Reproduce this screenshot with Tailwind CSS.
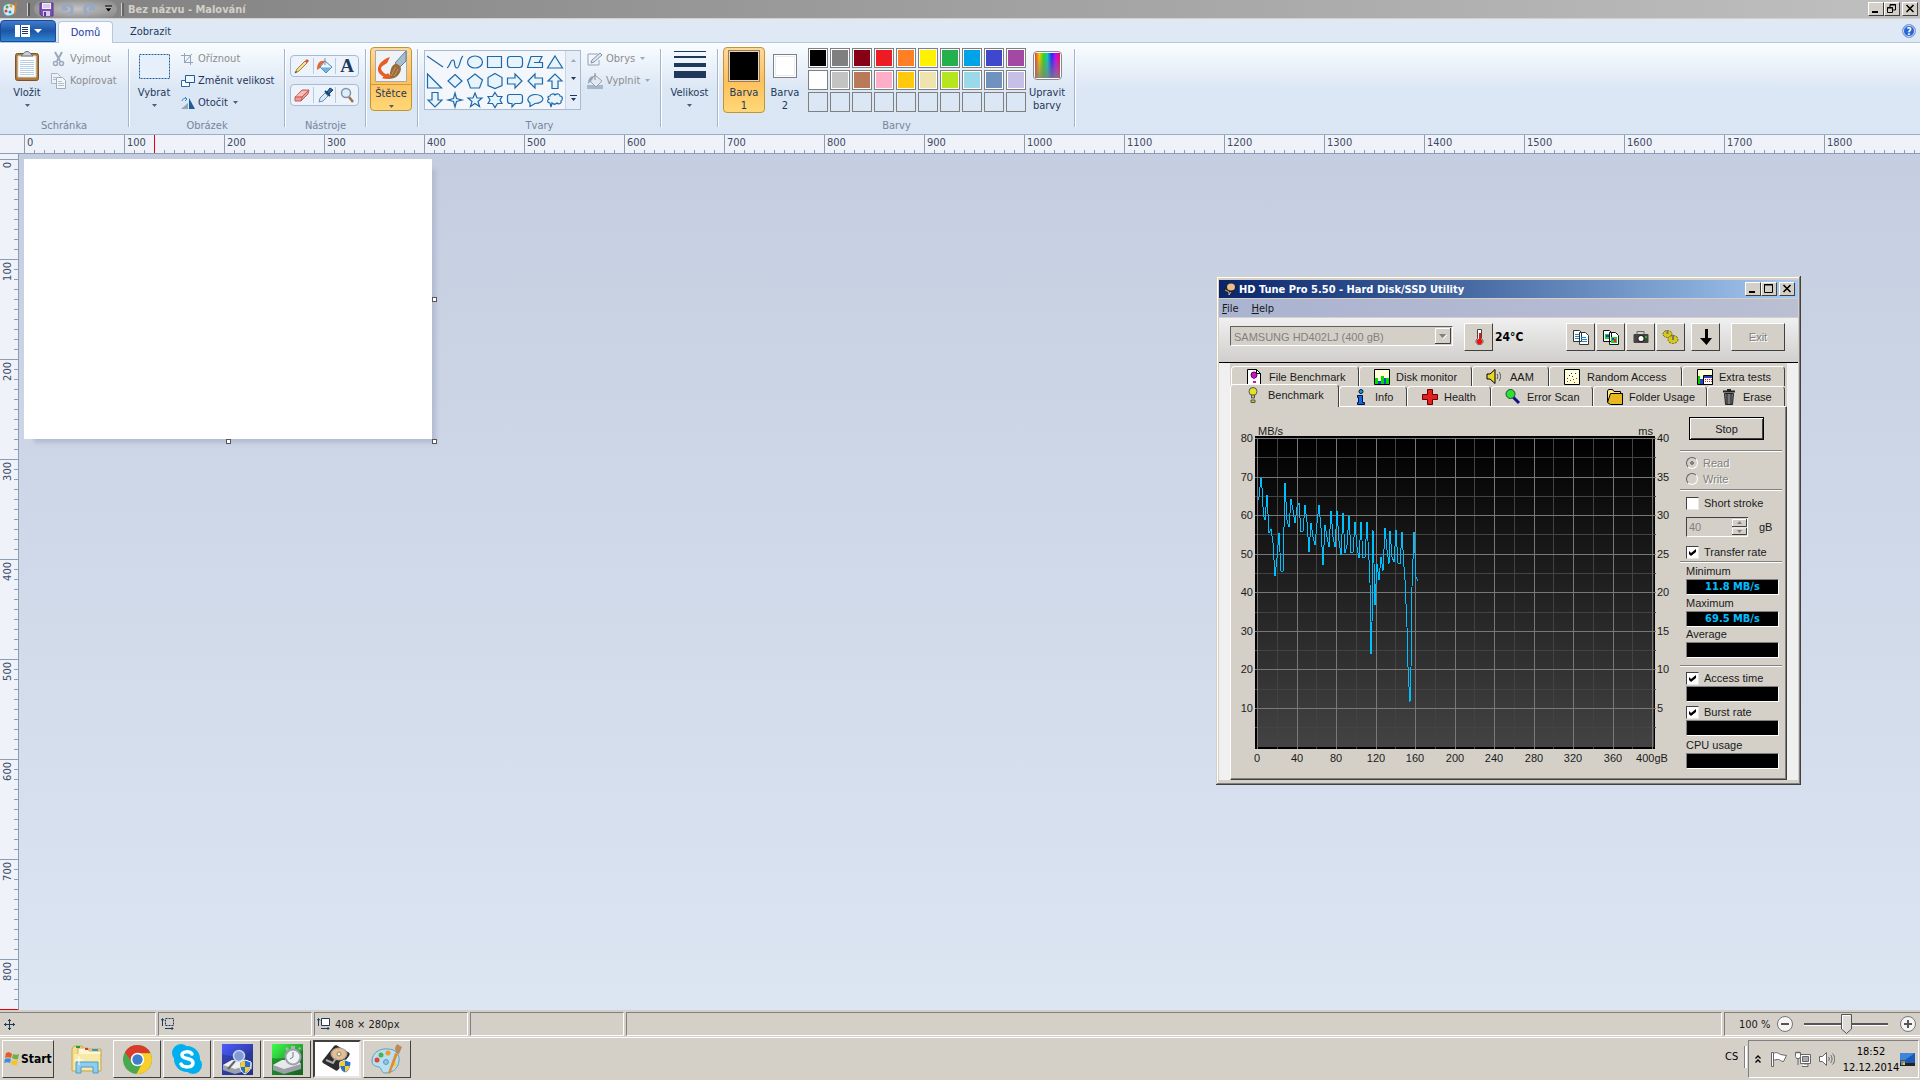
<!DOCTYPE html>
<html lang="cs">
<head>
    <meta charset="UTF-8">
    <meta name="viewport" content="width=device-width, initial-scale=1.0">
    <title>Bez názvu - Malování</title>
    <script src="https://cdn.jsdelivr.net/npm/@tailwindcss/browser@4"></script>
</head>
<body class="h-screen flex flex-col overflow-hidden bg-[#d4d0c8] text-[11px] leading-[14px] text-black font-['DejaVu_Sans_Condensed','DejaVu_Sans',sans-serif]">

    <!-- title bar -->
    <header class="h-[19px] shrink-0 flex items-center bg-linear-to-r from-[#808080] to-[#c0c0c0] border-b border-[#d4d0c8]">
        <svg class="w-4 h-4 ml-[2px]" viewBox="0 0 16 16">
            <path d="M1 8c0-4 4-6 8-5 4 0 6 4 5 7s-5 5-8 5-5-3-5-7z" fill="#d4ecf6" stroke="#4f94b8"/>
            <circle cx="4" cy="10" r="1.500" fill="#e33"/><circle cx="5" cy="6" r="1.500" fill="#4a4"/><circle cx="9" cy="5" r="1.500" fill="#f90"/><circle cx="8" cy="11" r="1.500" fill="#29c"/>
            <path d="M13 1l2 1-2 12-1-1z" fill="#e57a1c"/>
        </svg>
        <div class="w-[3px] h-[13px] ml-[9px] border-l border-[#d4d0c8] bg-[#555]"></div>
        <div class="h-[18px] w-[83px] ml-1 flex items-center gap-[6px] px-[5px] rounded-full bg-radial from-[#c4c4c4] to-transparent">
            <button aria-label="Uložit"><svg class="w-[15px] h-[15px]" viewBox="0 0 15 15"><path d="M1 1h13v13H3l-2-2z" fill="#7b4fb5" stroke="#59368f"/><path d="M3 1h9v6H3z" fill="#f4eefb"/><path d="M4 3h7M4 5h7" stroke="#b9a4d8"/><path d="M4 9h7v5H4z" fill="#d9cdea"/><path d="M5 10h2v4H5z" fill="#59368f"/></svg></button>
            <button aria-label="Zpět"><svg class="w-4 h-[14px]" viewBox="0 0 16 14"><path d="M3 2v5h5M3 6c4-5 10-3 9 2 0 2-2 4-4 5" fill="none" stroke="#98a9c2" stroke-width="3"/></svg></button>
            <button aria-label="Znovu"><svg class="w-4 h-[14px]" viewBox="0 0 16 14"><path d="M12 2v5H7M12 6C8 1 2 3 3 8c0 2 2 4 4 5" fill="none" stroke="#98a9c2" stroke-width="3"/></svg></button>
            <button aria-label="Přizpůsobit"><svg class="w-[9px] h-[8px]" viewBox="0 0 9 8"><path d="M1 1h7" stroke="#000"/><path d="M1 3h7L4.500 7z" fill="#000" stroke="#ddd" stroke-width=".5"/></svg></button>
        </div>
        <div class="w-[3px] h-[13px] ml-1 border-l border-[#d4d0c8] bg-[#666]"></div>
        <h1 class="ml-[4px] pt-[2px] font-bold text-[#d4d0c8]">Bez názvu - Malování</h1>
        <div class="ml-auto mr-[2px] flex">
            <button aria-label="Minimalizovat" class="w-4 h-[14px] bg-[#d4d0c8] border border-t-white border-l-white border-b-[#404040] border-r-[#404040]"><svg class="w-[14px] h-3" viewBox="0 0 14 12"><path d="M3 8h6v2H3z"/></svg></button>
            <button aria-label="Obnovit" class="w-4 h-[14px] bg-[#d4d0c8] border border-t-white border-l-white border-b-[#404040] border-r-[#404040]"><svg class="w-[14px] h-3" viewBox="0 0 14 12" fill="none" stroke="#000"><path d="M5 4V1.500h5.500V7H8M5 2h6M2.500 4.500h5v5h-5zM2 5h6"/></svg></button>
            <button aria-label="Zavřít" class="w-4 h-[14px] ml-[2px] bg-[#d4d0c8] border border-t-white border-l-white border-b-[#404040] border-r-[#404040]"><svg class="w-[14px] h-3" viewBox="0 0 14 12"><path d="M3.500 2l7 7M10.500 2l-7 7" stroke="#000" stroke-width="1.600"/></svg></button>
        </div>
    </header>

    <!-- ribbon tabs -->
    <nav class="h-6 shrink-0 flex items-end bg-[#dfe9f5] border-b border-[#b5c6dd] text-[#1e395b]">
        <button aria-label="Nabídka" class="w-14 h-[22px] flex items-center justify-center gap-1 rounded-t-sm border border-[#1b4a9a] bg-linear-to-b from-[#3f7ccb] via-[#1d55a8] to-[#2f86d0]">
            <svg class="w-[15px] h-3" viewBox="0 0 15 12"><path d="M0 0h15v12H0z" fill="#fff"/><path d="M5.500 0v12" stroke="#1d55a8"/><path d="M7 2.500h6M7 4.500h6M7 6.500h6M7 8.500h6" stroke="#1e395b"/></svg>
            <svg class="w-2 h-1" viewBox="0 0 8 4"><path d="M0 0h8L4 4z" fill="#fff"/></svg>
        </button>
        <button class="w-[55px] h-[22px] ml-[2px] -mb-px pt-px border border-b-0 border-[#b5c6dd] rounded-t-sm bg-[#fafcff] text-[#1c3aa0]">Domů</button>
        <button class="w-[75px] h-[22px] pt-[2px]">Zobrazit</button>
        <button aria-label="Nápověda" class="ml-auto mr-1 mb-1"><svg class="w-[14px] h-[14px]" viewBox="0 0 14 14"><circle cx="7" cy="7" r="6.500" fill="#2765d8" stroke="#8aa4cc"/><circle cx="7" cy="7" r="5.500" fill="none" stroke="#cfe0fa"/><text x="7" y="11" text-anchor="middle" font-size="10" font-weight="bold" fill="#fff">?</text></svg></button>
    </nav>

    <!-- ribbon -->
    <section class="h-[92px] shrink-0 flex border-b border-[#9cadc8] bg-linear-to-b from-[#fafdff] via-[#dce7f5] to-[#dbe6f4] text-[#1e395b]">
        <div class="w-32 flex flex-col pt-1">
            <div class="h-[72px] flex pl-[10px]">
                <button class="w-[34px] flex flex-col items-center pt-1">
                    <svg class="w-6 h-[30px]" viewBox="0 0 24 30"><rect x=".5" y="2.500" width="23" height="27" rx="2" fill="#ae7a3c" stroke="#7d5323"/><path d="M3 5h18v21H3z" fill="#fff" stroke="#d8d8d8"/><path d="M5 9.500h14M5 11.500h14M5 13.500h14M5 15.500h14M5 17.500h14M5 19.500h14M5 21.500h14M5 23.500h14" stroke="#b9cfe4"/><path d="M6 5l3-3c1-2 5-2 6 0l3 3z" fill="#c9ced4" stroke="#6b7178"/></svg>
                    <span class="mt-[5px]">Vložit</span>
                    <svg class="w-[5px] h-[3px] mt-1" viewBox="0 0 5 3"><path d="M0 0h5L2.500 3z" fill="#4c607a"/></svg>
                </button>
                <div class="ml-[7px] flex flex-col text-[#8d8d8d]">
                    <button class="h-[22px] flex items-center gap-1 pt-px"><svg class="w-[15px] h-4" viewBox="0 0 15 16"><path d="M4 1l5 9M11 1L6 10" stroke="#9aa9bd" stroke-width="2"/><circle cx="4.500" cy="12.500" r="2" fill="none" stroke="#9aa9bd" stroke-width="1.500"/><circle cx="10.500" cy="12.500" r="2" fill="none" stroke="#9aa9bd" stroke-width="1.500"/></svg>Vyjmout</button>
                    <button class="h-[22px] flex items-center gap-1 pt-px"><svg class="w-[15px] h-4" viewBox="0 0 15 16"><path d="M.5.5h6l3 3v7h-9z" fill="#eef2f7" stroke="#a9b4c4"/><path d="M5.500 4.500h6l3 3v8h-9z" fill="#f4f7fa" stroke="#a0acbd"/><path d="M2 4.500h3M2 6.500h3M7 8.500h4M7 10.500h6M7 12.500h6" stroke="#b4bfcd"/></svg>Kopírovat</button>
                </div>
            </div>
            <div class="text-center text-[#75859c]">Schránka</div>
        </div>
        <div class="w-[2px] h-[78px] mt-[6px] border-l border-[#a3b5cf] bg-white"></div>

        <div class="w-[154px] flex flex-col pt-1">
            <div class="h-[72px] flex">
                <button class="w-12 flex flex-col items-center pt-[7px]">
                    <svg class="w-[31px] h-[25px]" viewBox="0 0 31 25"><rect x=".5" y=".5" width="30" height="24" fill="#e6f0fa" stroke="#1e5c9c" stroke-dasharray="2 1"/></svg>
                    <span class="mt-[7px]">Vybrat</span>
                    <svg class="w-[5px] h-[3px] mt-1" viewBox="0 0 5 3"><path d="M0 0h5L2.500 3z" fill="#4c607a"/></svg>
                </button>
                <div class="ml-[3px] flex flex-col items-start">
                    <button class="h-[22px] flex items-center gap-[3px] pt-px text-[#8d8d8d]"><svg class="w-[14px] h-3" viewBox="0 0 14 12" fill="none" stroke="#93a3b8"><path d="M3.500 0v9.500H12M0 2.500h9.500V12M3 10l8-9"/></svg>Oříznout</button>
                    <button class="h-[22px] flex items-center gap-[3px] pt-px"><svg class="w-[14px] h-3" viewBox="0 0 14 12"><path d="M.5 5.500h8v6h-8z" fill="#fff" stroke="#2a6aac"/><path d="M4.500.5h9v7h-9z" fill="#eef6fd" stroke="#1e5c9c"/></svg>Změnit velikost</button>
                    <button class="h-[22px] flex items-center gap-[3px] pt-px"><svg class="w-[14px] h-3" viewBox="0 0 14 12"><path d="M0 12l7-6v6z" fill="#9aa4b0"/><path d="M8 1l6 11H8z" fill="#1e5c9c"/><path d="M1 4c1-3 3-3 5-2M4 0l2 2-2 2" fill="none" stroke="#2a8ad0"/></svg>Otočit<svg class="w-[5px] h-[3px] ml-[2px]" viewBox="0 0 5 3"><path d="M0 0h5L2.500 3z" fill="#4c607a"/></svg></button>
                </div>
            </div>
            <div class="text-center text-[#75859c]">Obrázek</div>
        </div>
        <div class="w-[2px] h-[78px] mt-[6px] border-l border-[#a3b5cf] bg-white"></div>

        <div class="w-[79px] flex flex-col pt-1">
            <div class="h-[72px] pl-1 pt-2 flex flex-col gap-[7px]">
                <div class="w-[69px] h-[22px] flex items-center justify-around divide-x divide-[#b9c9de] border border-[#a9bbd4] rounded-sm bg-[#ecf3fb]">
                    <button aria-label="Tužka" class="flex-1 flex justify-center"><svg class="w-4 h-4" viewBox="0 0 16 16"><path d="M1 15l2-4 8-8 2 2-8 8z" fill="#f8dc8c" stroke="#8a6a2c" stroke-width=".8"/><path d="M11 3l2 2 2-2-2-2z" fill="#d4504f"/><path d="M1 15l1-2 1 1z" fill="#333"/></svg></button>
                    <button aria-label="Výplň" class="flex-1 flex justify-center"><svg class="w-[17px] h-4" viewBox="0 0 17 16"><path d="M9 3l7 6-6 6-6-6z" fill="#e8f4fc" stroke="#4a86b8"/><path d="M9 0v7" stroke="#888"/><path d="M9 3C4 2 1 5 1 12l3-2 1-3z" fill="#e2673a"/><path d="M5 9.500h10l-5 5z" fill="#6fb0e0"/></svg></button>
                    <button aria-label="Text" class="flex-1 font-bold text-[19px] leading-5 font-['Liberation_Serif',serif] text-[#1e395b]">A</button>
                </div>
                <div class="w-[69px] h-[22px] flex items-center justify-around divide-x divide-[#b9c9de] border border-[#a9bbd4] rounded-sm bg-[#ecf3fb]">
                    <button aria-label="Guma" class="flex-1 flex justify-center"><svg class="w-4 h-4" viewBox="0 0 16 16"><path d="M1 10l7-7h7l-1 4-7 7H1z" fill="#ef9a94" stroke="#c0605c"/><path d="M1 10h7l7-7M8 10l-1 4" fill="none" stroke="#c0605c"/><path d="M2 9l6-5h5L8 9z" fill="#f7bdb8"/></svg></button>
                    <button aria-label="Kapátko" class="flex-1 flex justify-center"><svg class="w-4 h-4" viewBox="0 0 16 16"><path d="M2 15l1-4 5-5 3 3-5 5z" fill="#d8ecfa" stroke="#6a8fb4"/><path d="M8 4l5 5" stroke="#15406e" stroke-width="2"/><path d="M10 5l3-4 3 2-4 4z" fill="#2a6aac" stroke="#15406e"/></svg></button>
                    <button aria-label="Lupa" class="flex-1 flex justify-center"><svg class="w-4 h-4" viewBox="0 0 16 16"><path d="M10 10l4 5" stroke="#9a7248" stroke-width="2.500"/><circle cx="7" cy="6" r="4.500" fill="#dcedfb" stroke="#8392a5" stroke-width="1.500"/></svg></button>
                </div>
            </div>
            <div class="text-center text-[#75859c]">Nástroje</div>
        </div>
        <div class="w-[2px] h-[78px] mt-[6px] border-l border-[#a3b5cf] bg-white"></div>

        <div class="w-[50px] pl-[3px] pt-1">
            <button class="w-[42px] h-16 flex flex-col items-center rounded-sm border border-[#c2962e] bg-linear-to-b from-[#fcd9a0] via-[#fdc05c] to-[#ffd778]">
                <span class="w-full h-[37px] flex justify-center pt-[2px] border-b border-[#d09a35]">
                    <svg class="w-8 h-8" viewBox="0 0 32 32"><path d="M.5.5h31v31H.5z" fill="#eef3f7" stroke="#a8a8a8"/><path d="M15 7C9 9 4 13 3 18c-1 4 3 8 10 11l5-2C11 25 6 22 6 18c1-3 7-4 7-7z" fill="#ea5a26"/><path d="M31 1v10l-6 6-5-4z" fill="#a9bdd0" stroke="#6a7f94"/><path d="M20 14c3 0 6 2 6 5-1 6-5 10-13 10 3-4 1-12 7-15z" fill="#9a6b3a"/><path d="M21 17c-2 2-3 6-5 9M23 19c-1 3-3 5-4 7" fill="none" stroke="#c79c66"/><path d="M12 29c-3 0-5-1-5-1l6-5 3 5z" fill="#ea5a26"/></svg>
                </span>
                <span class="mt-[2px]">Štětce</span>
                <svg class="w-[5px] h-[3px] mt-1" viewBox="0 0 5 3"><path d="M0 0h5L2.500 3z" fill="#4c607a"/></svg>
            </button>
        </div>
        <div class="w-[2px] h-[78px] mt-[6px] border-l border-[#a3b5cf] bg-white"></div>

        <div class="w-[241px] flex flex-col pt-1">
            <div class="h-[72px] flex pl-[5px]">
                <div class="w-[157px] h-[60px] mt-[3px] flex border border-[#a9bbd4] bg-[#f3f7fc]">
                    <div id="shapes" class="w-[140px] shrink-0 grid grid-cols-7 pt-px"></div>
                    <div class="flex-1 flex flex-col justify-around items-center border-l border-[#c9d5e6] bg-[#e4edf8]">
                        <svg class="w-[5px] h-[3px]" viewBox="0 0 5 3"><path d="M0 3h5L2.500 0z" fill="#9aa9bd"/></svg>
                        <svg class="w-[5px] h-[3px]" viewBox="0 0 5 3"><path d="M0 0h5L2.500 3z" fill="#1e395b"/></svg>
                        <svg class="w-[7px] h-[6px]" viewBox="0 0 7 6"><path d="M0 0h7v1H0zM1 3h5L3.500 6z" fill="#1e395b"/></svg>
                    </div>
                </div>
                <div class="ml-[6px] flex flex-col items-start text-[#8d8d8d]">
                    <button class="h-[22px] flex items-center gap-[3px] pt-px"><svg class="w-4 h-[14px]" viewBox="0 0 16 14"><path d="M11 2H1v11h11V8" fill="none" stroke="#93a3b8"/><path d="M4 11l1-3 8-7 2 2-8 7z" fill="#dfe6ef" stroke="#8392a8"/></svg>Obrys<svg class="w-[5px] h-[3px] ml-[2px]" viewBox="0 0 5 3"><path d="M0 0h5L2.500 3z" fill="#9aa9bd"/></svg></button>
                    <button class="h-[22px] flex items-center gap-[3px] pt-px"><svg class="w-4 h-4" viewBox="0 0 16 16"><path d="M0 12h16v4H0z" fill="#a9b6c8"/><path d="M8 2l7 6-6 6-6-6z" fill="#e3e9f1" stroke="#93a3b8"/><path d="M8 0v7" stroke="#888"/><path d="M7 3C3 3 1 6 1 11l4-4z" fill="#93a3b8"/></svg>Vyplnit<svg class="w-[5px] h-[3px] ml-[2px]" viewBox="0 0 5 3"><path d="M0 0h5L2.500 3z" fill="#9aa9bd"/></svg></button>
                </div>
            </div>
            <div class="text-center text-[#75859c]">Tvary</div>
        </div>
        <div class="w-[2px] h-[78px] mt-[6px] border-l border-[#a3b5cf] bg-white"></div>

        <button class="w-[55px] h-[75px] flex flex-col items-center pt-2">
            <svg class="w-8 h-[27px]" viewBox="0 0 32 27"><path d="M0 0h32v1H0zM0 5h32v2H0zM0 12h32v4H0zM0 20h32v7H0z" fill="#1e395b"/></svg>
            <span class="mt-2">Velikost</span>
            <svg class="w-[5px] h-[3px] mt-1" viewBox="0 0 5 3"><path d="M0 0h5L2.500 3z" fill="#4c607a"/></svg>
        </button>
        <div class="w-[2px] h-[78px] mt-[6px] border-l border-[#a3b5cf] bg-white"></div>

        <div class="w-[355px] flex flex-col pt-1">
            <div class="h-[72px] flex items-start pl-1 leading-[13px]">
                <button class="w-[42px] h-[66px] flex flex-col items-center pt-[2px] rounded-sm border border-[#c2962e] bg-linear-to-b from-[#fcd9a0] via-[#fdc05c] to-[#ffd778]">
                    <span class="w-8 h-8 mb-1 border border-[#808080] bg-black shadow-[inset_0_0_0_1px_#fdd08c]"></span>Barva<br>1
                </button>
                <button class="w-10 h-[66px] flex flex-col items-center pt-[7px]">
                    <span class="w-6 h-6 mb-2 border border-[#808080] bg-white shadow-[inset_0_0_0_1px_#fff,inset_0_0_0_2px_#e6edf5]"></span>Barva<br>2
                </button>
                <div id="palette" class="ml-[3px] mt-px w-[218px] grid grid-cols-10 gap-[2px]"></div>
                <button class="w-[42px] h-[66px] flex flex-col items-center pt-1">
                    <span class="w-[29px] h-[29px] mb-[6px] rounded-sm border border-[#8a8a8a] bg-white p-px"><span class="block w-full h-full bg-[linear-gradient(to_bottom,transparent,#808080cc),linear-gradient(to_right,#e33,#fc0,#3d0,#0cc,#22f,#c0f,#f04)]"></span></span>Upravit<br>barvy
                </button>
            </div>
            <div class="text-center text-[#75859c]">Barvy</div>
        </div>
        <div class="w-[2px] h-[78px] mt-[6px] border-l border-[#a3b5cf] bg-white"></div>
    </section>

    <!-- horizontal ruler -->
    <div class="h-[19px] shrink-0 relative flex overflow-hidden pl-6 bg-[#f0f2f9] border-b border-[#8c9db5] text-[#3b4a66]" id="rulerX">
        <div class="absolute left-[154px] top-0 h-full w-px bg-red-600"></div>
    </div>

    <!-- workspace -->
    <main class="flex-1 min-h-0 flex">
        <div class="w-[19px] shrink-0 flex flex-col overflow-hidden pt-[5px] bg-[#f0f2f9] border-r border-[#8c9db5] relative text-[#3b4a66]" id="rulerY">
            <div class="absolute left-0 bottom-0 w-full h-px bg-red-600"></div>
        </div>
        <div class="flex-1 relative overflow-hidden bg-linear-to-b from-[#c5cee0] to-[#dce5f2] pl-[5px] pt-[5px]">
            <div class="relative w-[408px] h-[280px] bg-white shadow-[7px_7px_4px_-3px_#b2bdd2]">
                <span class="absolute -right-[5px] top-[138px] w-[5px] h-[5px] bg-white border border-[#555]"></span>
                <span class="absolute left-[202px] -bottom-[5px] w-[5px] h-[5px] bg-white border border-[#555]"></span>
                <span class="absolute -right-[5px] -bottom-[5px] w-[5px] h-[5px] bg-white border border-[#555]"></span>
            </div>
        </div>
    </main>

    <!-- status bar -->
    <footer class="h-[27px] shrink-0 flex items-stretch gap-[2px] pt-[2px] pb-[1px] text-[#1a1a1a]">
        <div class="w-[156px] flex items-center pl-1 border border-l-0 border-t-[#808080] border-b-white border-r-white">
            <svg class="w-[11px] h-[11px]" viewBox="0 0 11 11" fill="none" stroke="#1e395b"><path d="M5.500 0v11M0 5.500h11M4 2l1.500-1.500L7 2M4 9l1.500 1.500L7 9M2 4L.5 5.500 2 7M9 4l1.500 1.500L9 7"/></svg>
        </div>
        <div class="w-[154px] flex items-center pl-[2px] border border-t-[#808080] border-l-[#808080] border-b-white border-r-white">
            <svg class="w-[13px] h-3" viewBox="0 0 13 12" fill="none" stroke="#1e395b"><path d="M1.500 8V1M0 2.500L1.500.5 3 2.500M4 10.500h8M10.500 9l1.500 1.500L10.500 12"/><path d="M4.500.5h8v7h-8z" stroke-dasharray="2 1"/></svg>
        </div>
        <div class="w-[154px] flex items-center gap-[5px] pl-[2px] border border-t-[#808080] border-l-[#808080] border-b-white border-r-white">
            <svg class="w-[13px] h-3" viewBox="0 0 13 12" fill="none" stroke="#1e395b"><path d="M1.500 8V1M0 2.500L1.500.5 3 2.500M4 10.500h8M10.500 9l1.500 1.500L10.500 12"/><path d="M4.500.5h8v7h-8z" fill="#fff"/></svg>
            <span class="pt-px">408 × 280px</span>
        </div>
        <div class="w-[154px] border border-t-[#808080] border-l-[#808080] border-b-white border-r-white"></div>
        <div class="flex-1 border border-t-[#808080] border-l-[#808080] border-b-white border-r-white"></div>
        <div class="w-[196px] flex items-center pl-[14px] pr-1 border border-r-0 border-t-[#808080] border-l-[#808080] border-b-white">
            <label for="zoom" class="w-[38px] pt-px">100 %</label>
            <button aria-label="Oddálit"><svg class="w-4 h-4" viewBox="0 0 16 16"><circle cx="8" cy="8" r="7.500" fill="#f4f4f4" stroke="#777"/><path d="M4 7h8v2H4z" fill="#555"/></svg></button>
            <span class="grid items-center ml-[11px]">
                <input id="zoom" type="range" min="0" max="100" value="50" class="col-start-1 row-start-1 w-[84px] h-[3px] appearance-none bg-[#555] border-b border-white [&::-webkit-slider-thumb]:appearance-none [&::-webkit-slider-thumb]:w-[10px] [&::-webkit-slider-thumb]:h-5">
                <svg class="col-start-1 row-start-1 justify-self-center pointer-events-none w-[11px] h-5" viewBox="0 0 11 20"><path d="M.5.5h10V15l-5 4.500L.5 15z" fill="#dedcd8" stroke="#555"/><path d="M1.500 15V1.500h8" fill="none" stroke="#fff"/></svg>
            </span>
            <button aria-label="Přiblížit" class="ml-auto"><svg class="w-4 h-4" viewBox="0 0 16 16"><circle cx="8" cy="8" r="7.500" fill="#f4f4f4" stroke="#777"/><path d="M4 7h8v2H4zM7 4h2v8H7z" fill="#555"/></svg></button>
        </div>
    </footer>

    <!-- taskbar -->
    <footer class="h-[43px] shrink-0 flex items-start gap-[2px] pt-[2px] pl-[2px] border-t border-white">
        <button class="w-[52px] h-[38px] flex items-center gap-px pl-px font-bold text-[12px] bg-[#d4d0c8] border border-t-white border-l-white border-b-[#404040] border-r-[#404040]">
            <svg class="w-4 h-[14px] shrink-0" viewBox="0 0 16 14"><path d="M2 1c2-1 4-1 6 1L7 6C5 5 3 5 1 6z" fill="#e8592a"/><path d="M9 2c2 1 4 1 6 0l-1 5c-2 1-4 0-6-1z" fill="#6db33f"/><path d="M1 7c2-1 4-1 6 0l-1 4c-2-1-4-1-6 0z" fill="#3f8fd8"/><path d="M8 8c2 1 4 1 6 0l-1 5c-2 1-4 0-6-1z" fill="#f7c325"/></svg>Start
        </button>
        <button aria-label="Průzkumník" class="w-12 h-[38px] ml-[7px] flex items-center justify-center">
            <svg class="w-8 h-[30px]" viewBox="0 0 32 30"><path d="M1 5l2-3h8l2 3h17v22H1z" fill="#f3dd8c" stroke="#c8a850"/><path d="M7 4h10l1 3h12v4H7z" fill="#fff6cf" stroke="#cbb067"/><path d="M5 2h4v2H5z" fill="#2a9a3a"/><path d="M14 4h3v2h-3z" fill="#d33"/><path d="M21 5h6v2h-6z" fill="#39c"/><path d="M3 10h26v16H3z" fill="#f9e9a8"/><path d="M5 18h22v11h-5v-6H10v6H5z" fill="#8ecdf0" stroke="#4a9cc8"/><path d="M8 12v9M4 16h8" stroke="#fff"/></svg>
        </button>
        <button aria-label="Google Chrome" class="w-12 h-[38px] flex items-center justify-center border border-t-white border-l-white border-b-[#404040] border-r-[#404040]">
            <svg class="w-[29px] h-[29px]" viewBox="0 0 28 28"><circle cx="14" cy="14" r="14" fill="#4aa94e"/><path d="M1.900 7A14 14 0 0 1 26.600 8H14a6 6 0 0 0-5 9z" fill="#db3a2b"/><path d="M26.600 8A14 14 0 0 1 13 28l6-11a6 6 0 0 0-5-9z" fill="#f9cf2c"/><circle cx="14" cy="14" r="6.500" fill="#fff"/><circle cx="14" cy="14" r="5" fill="#3f7fca"/></svg>
        </button>
        <button aria-label="Skype" class="w-12 h-[38px] flex items-center justify-center border border-t-white border-l-white border-b-[#404040] border-r-[#404040]">
            <svg class="w-[30px] h-[30px]" viewBox="0 0 30 30"><circle cx="9" cy="9" r="9" fill="#00aff0"/><circle cx="21" cy="21" r="9" fill="#00aff0"/><circle cx="15" cy="15" r="13" fill="#00aff0"/><path d="M20 10c-2-3-10-3-10 1 0 5 11 2 11 8 0 5-10 5-12 1" fill="none" stroke="#fff" stroke-width="3.500" stroke-linecap="round"/></svg>
        </button>
        <button aria-label="CrystalDiskInfo" class="w-12 h-[38px] flex items-center justify-center border border-t-white border-l-white border-b-[#404040] border-r-[#404040]">
            <svg class="w-[31px] h-[31px]" viewBox="0 0 31 31"><defs><linearGradient id="blue" x1="0" y1="0" x2="1" y2="1"><stop offset="0" stop-color="#4a5cff"/><stop offset="1" stop-color="#1c2870"/></linearGradient></defs><path d="M0 0h31v31H0z" fill="url(#blue)"/><path d="M0 10c10 4 22 2 31-4v25H0z" fill="#2a3890" opacity=".6"/><path d="M1 21l9-5h15l5 4v5l-17 5L1 26z" fill="#9ba1aa"/><path d="M1 21l12 4 17-5-5-4H10z" fill="#eef0f3"/><circle cx="17" cy="12" r="5.500" fill="#7f9bd8" stroke="#c8d2e8" stroke-width="1.500"/><path d="M13 17l-7 8" stroke="#666" stroke-width="2"/><path d="M18 18l5-2 6 2c0 7-2 10-6 12-4-2-6-6-5-12z" fill="#2a6fd0" stroke="#fff"/><path d="M23 17v6h-5l1-5zM23 23h5c-1 3-2 5-5 6z" fill="#f7cd2a"/></svg>
        </button>
        <button aria-label="CrystalDiskMark" class="w-12 h-[38px] flex items-center justify-center border border-t-white border-l-white border-b-[#404040] border-r-[#404040]">
            <svg class="w-[31px] h-[31px]" viewBox="0 0 31 31"><defs><linearGradient id="green" x1="0" y1="0" x2="1" y2="1"><stop offset="0" stop-color="#3cff4a"/><stop offset="1" stop-color="#145a1e"/></linearGradient></defs><path d="M0 0h31v31H0z" fill="url(#green)"/><path d="M0 14c10 2 22-2 31-8v25H0z" fill="#156a24" opacity=".6"/><path d="M1 21l9-5h15l4 4v5l-17 5L1 26z" fill="#9aa0a6"/><path d="M1 21l11 4 17-5-4-4H10z" fill="#e6e8ea"/><circle cx="21" cy="13" r="7.500" fill="#eef2f4" stroke="#9aa2aa" stroke-width="2"/><path d="M19 2h4v3h-4zM13 5l2-2 2 2-2 2zM26 4l2-1 1 2-2 1z" fill="#aab2ba"/><path d="M21 13V8M21 13l-3 2" stroke="#778"/></svg>
        </button>
        <button aria-label="HD Tune Pro" class="w-12 h-[38px] flex items-center justify-center bg-white border-2 border-t-[#404040] border-l-[#404040] border-b-[#e8e6e2] border-r-[#e8e6e2]">
            <svg class="w-[30px] h-[29px]" viewBox="0 0 30 29"><path d="M14 0l12 7c2 1 2 2 1 4L16 25c-1 1-2 1-3 0L1 18c-1-1-1-2 0-3L12 1z" fill="#2e2c2c"/><ellipse cx="17" cy="9" rx="8.500" ry="6.500" fill="#a9a29a"/><ellipse cx="17" cy="9" rx="7" ry="5.500" fill="#e8bd90"/><circle cx="17" cy="9" r="2" fill="#f4f0ea" stroke="#886"/><path d="M4 15l7 3 3-5" fill="none" stroke="#aaa" stroke-width="2"/><path d="M18 17l5-2 6 2c0 6-2 9-6 11-4-2-6-5-5-11z" fill="#2a6fd0" stroke="#fff"/><path d="M23 16v5h-5v-4zM23 21h5c-1 3-2 5-5 6z" fill="#f7cd2a"/></svg>
        </button>
        <button aria-label="Malování" class="w-12 h-[38px] flex items-center justify-center border border-t-white border-l-white border-b-[#404040] border-r-[#404040]">
            <svg class="w-8 h-[31px]" viewBox="0 0 32 31"><path d="M1 17C1 9 9 4 17 5c8 0 12 6 11 12-1 8-7 12-14 12-4 0-3-5-6-6S1 22 1 17z" fill="#b9dff0" stroke="#5d9fc0"/><circle cx="6" cy="16" r="2.500" fill="#e0463c"/><circle cx="10" cy="11" r="2.500" fill="#4fb04f"/><circle cx="17" cy="9" r="2.500" fill="#f09a30"/><circle cx="15" cy="18" r="2.500" fill="#8fc4de" stroke="#5d9fc0"/><circle cx="23" cy="20" r="2.500" fill="#e8cf50"/><path d="M26 0l5 3-3 7-3-1-1-5z" fill="#b98a5c"/><path d="M24 9l3 1-8 20-2-1z" fill="#e58a30"/></svg>
        </button>
        <div class="ml-auto flex items-start">
            <span class="w-[19px] mt-[10px]">CS</span>
            <div class="w-[3px] h-[22px] mt-[6px] mr-[1px] border-l border-[#808080] bg-white"></div>
            <div class="w-[171px] h-[38px] mr-px flex items-center border border-t-[#808080] border-l-[#808080] border-b-white border-r-white">
                <svg class="w-[6px] h-2 ml-[6px]" viewBox="0 0 6 8" fill="none" stroke="#000" stroke-width="1.300"><path d="M.5 3.500L3 1l2.500 2.500M.5 7.500L3 5l2.500 2.500"/></svg>
                <svg class="w-4 h-4 ml-[10px]" viewBox="0 0 16 16" fill="#fff" stroke="#666"><path d="M.5 1.500h2v14h-2zM2.500 2.500c3-2 5 0 7 1l6 1-3 6c-3 0-3-2-5-2s-3 0-5 1z"/></svg>
                <svg class="w-4 h-4 ml-2" viewBox="0 0 16 16" fill="#fff" stroke="#666"><path d="M5.500 3.500h10v9h-10z"/><path d="M7.500 5.500h6v5h-6z" fill="#aaa"/><path d="M9 13h4v2.500H7"/><path d="M.5 1.500h5v4l-1 2h-3l-1-2zM3 8v6M2 .5v2M4 .5v2"/></svg>
                <svg class="w-4 h-4 ml-2" viewBox="0 0 16 16" fill="none" stroke="#666"><path d="M.5 5.500h3l4-4v13l-4-4h-3z" fill="#fff"/><path d="M9.500 6c1 1 1 3 0 4M11.500 4c2 2 2 6 0 8M13.500 2.500c3 3 3 8 0 11"/></svg>
                <time class="ml-[7px] pt-px w-[58px] text-center leading-4">18:52<br>12.12.2014</time>
                <svg class="w-[15px] h-[13px]" viewBox="0 0 15 13"><path d="M0 0h15v10H0z" fill="#1c5bb5"/><path d="M0 0h15L5 7H0z" fill="#3f86da"/><path d="M0 10h15v3H0z" fill="#222"/><path d="M1 8h2v2H1z" fill="#e8592a"/><path d="M3 8h2v2H3z" fill="#6db33f"/><path d="M1 10h2v2H1z" fill="#3fa0e8"/><path d="M3 10h2v2H3z" fill="#f7c325"/></svg>
            </div>
        </div>
    </footer>

    <!-- HD Tune window -->
    <div class="absolute right-[119px] top-[276px] w-[585px] px-[3px] pt-1 pb-[5px] bg-[#d4d0c8] text-[#1a1a1a] font-['Liberation_Sans',Arial,sans-serif] shadow-[inset_-1px_-1px_#404040,inset_1px_1px_#d4d0c8,inset_-2px_-2px_#808080,inset_2px_2px_#fff]">
        <div class="h-[18px] flex items-center px-[2px] bg-linear-to-r from-[#0a246a] to-[#a6caf0] text-white font-bold font-['DejaVu_Sans_Condensed','DejaVu_Sans',sans-serif]">
            <svg class="w-[14px] h-[14px] mx-[2px]" viewBox="0 0 14 14"><path d="M7 0l7 5-7 8-7-5z" fill="#222"/><ellipse cx="8" cy="5" rx="4" ry="3.500" fill="#e9bd8c"/><path d="M2 8l4 2v3l2-3" fill="none" stroke="#bbb"/></svg>
            <span class="pt-[2px]">HD Tune Pro 5.50 - Hard Disk/SSD Utility</span>
            <div class="ml-auto mr-px flex text-black">
                <button aria-label="Minimize" class="w-4 h-[14px] bg-[#d4d0c8] border border-t-white border-l-white border-b-[#404040] border-r-[#404040]"><svg class="w-[14px] h-3" viewBox="0 0 14 12"><path d="M3 8h6v2H3z"/></svg></button>
                <button aria-label="Maximize" class="w-4 h-[14px] bg-[#d4d0c8] border border-t-white border-l-white border-b-[#404040] border-r-[#404040]"><svg class="w-[14px] h-3" viewBox="0 0 14 12"><path d="M2.500 1.500h8v8h-8zM2 2h9" fill="none" stroke="#000"/></svg></button>
                <button aria-label="Close" class="w-4 h-[14px] ml-[2px] bg-[#d4d0c8] border border-t-white border-l-white border-b-[#404040] border-r-[#404040]"><svg class="w-[14px] h-3" viewBox="0 0 14 12"><path d="M3.500 2l7 7M10.500 2l-7 7" stroke="#000" stroke-width="1.600"/></svg></button>
            </div>
        </div>
        <div class="h-5 flex items-center gap-[13px] pl-[3px] pt-px border-y border-[#d4d0c8] bg-linear-to-r from-[#aab3d0] to-[#babfd2] font-['DejaVu_Sans_Condensed','DejaVu_Sans',sans-serif]">
            <button><u>F</u>ile</button>
            <button><u>H</u>elp</button>
        </div>
        <div class="h-[45px] flex items-start pt-[5px] pl-[11px] pr-[13px] border-b border-black bg-linear-to-b from-[#f0f0f0] to-[#d0cfcd]">
            <div class="grid w-[223px] h-5 mt-[3px] items-center">
                <select aria-label="Drive" disabled class="col-start-1 row-start-1 w-full h-5 appearance-none pl-[3px] pt-px border border-t-[#606060] border-l-[#606060] border-b-white border-r-white bg-[#d4d0c8] text-[#808080] opacity-100"><option>SAMSUNG HD402LJ (400 gB)</option></select>
                <svg class="col-start-1 row-start-1 justify-self-end mr-[2px] w-4 h-4 pointer-events-none" viewBox="0 0 16 16"><path d="M.5 16V.5H16" fill="none" stroke="#fff"/><path d="M0 15.500h15.500V0" fill="none" stroke="#404040"/><path d="M4 6h7l-3.500 4z" fill="#808080"/><path d="M8 11l4-4" stroke="#fff"/></svg>
            </div>
            <button aria-label="Temperature" class="ml-[11px] w-[29px] h-7 flex items-center justify-center bg-[#d4d0c8] border border-t-white border-l-white border-b-[#404040] border-r-[#404040]"><svg class="w-3 h-[18px]" viewBox="0 0 12 18"><path d="M4.500 1.500h4v9c3 3 1 6-2 6s-5-3-2-6z" fill="#fff" stroke="#444"/><path d="M6 5h2v7H6z" fill="#e11"/><circle cx="6.500" cy="13.500" r="2.800" fill="#e11"/></svg></button>
            <span class="ml-[2px] mt-[7px] font-bold text-[12px] text-black font-['DejaVu_Sans_Condensed','DejaVu_Sans',sans-serif]">24°C</span>
            <div class="ml-auto flex gap-px">
                <button aria-label="Copy text" class="w-[29px] h-7 flex items-center justify-center bg-[#d4d0c8] border border-t-white border-l-white border-b-[#404040] border-r-[#404040]"><svg class="w-4 h-4" viewBox="0 0 16 16"><path d="M.5 1.500h6l2 2v9h-8zM6.500 3.500h6l3 3v9h-9z" fill="#fff" stroke="#333"/><path d="M2 5.500h4M2 7.500h4M2 9.500h4M8 8.500h5M8 10.500h6M8 12.500h6" stroke="#28c"/></svg></button>
                <button aria-label="Copy picture" class="w-[29px] h-7 flex items-center justify-center bg-[#d4d0c8] border border-t-white border-l-white border-b-[#404040] border-r-[#404040]"><svg class="w-4 h-4" viewBox="0 0 16 16"><path d="M.5 1.500h6l2 2v9h-8zM6.500 3.500h6l3 3v9h-9z" fill="#fff" stroke="#111"/><path d="M2 5h4v5H2z" fill="#2c3"/><path d="M3 6h3v2H3z" fill="#24c"/><path d="M8 8h6v6H8z" fill="#2c3"/><path d="M9 9h2v2H9z" fill="#24c"/><path d="M11 10h2v3h-2z" fill="#e22"/></svg></button>
                <button aria-label="Screenshot" class="w-[29px] h-7 flex items-center justify-center bg-[#d4d0c8] border border-t-white border-l-white border-b-[#404040] border-r-[#404040]"><svg class="w-4 h-[14px]" viewBox="0 0 16 14"><path d="M4 4V1.500h7V4" fill="none" stroke="#666"/><rect x=".5" y="4" width="15" height="9" rx="1" fill="#444"/><circle cx="8" cy="8.500" r="3.500" fill="#222"/><circle cx="8" cy="8.500" r="2.500" fill="#fff"/><path d="M12 6h2v2h-2z" fill="#2b2"/></svg></button>
                <button aria-label="Options" class="w-[29px] h-7 flex items-center justify-center bg-[#d4d0c8] border border-t-white border-l-white border-b-[#404040] border-r-[#404040]"><svg class="w-[17px] h-4" viewBox="0 0 17 16" fill="#d8c818" stroke="#6b6408"><ellipse cx="5.500" cy="5" rx="4.500" ry="3.500" stroke-dasharray="2 1"/><ellipse cx="11" cy="10.500" rx="5" ry="4" stroke-dasharray="2 1"/><path d="M5.500 1v4M11 6v5" stroke="#777" stroke-width="2"/></svg></button>
            </div>
            <button aria-label="Save" class="ml-[6px] w-[29px] h-7 flex items-center justify-center bg-[#d4d0c8] border border-t-white border-l-white border-b-[#404040] border-r-[#404040]"><svg class="w-[14px] h-4" viewBox="0 0 14 16"><path d="M6 0h3v9h4l-5.500 7L1 9h5z"/></svg></button>
            <button disabled class="ml-[11px] w-[54px] h-7 text-[#808080] text-shadow-[1px_1px_#fff] bg-[#d4d0c8] border border-t-white border-l-white border-b-[#404040] border-r-[#404040]">Exit</button>
        </div>

        <div class="bg-[#f0f0f0] px-[11px]">
            <div class="bg-[#d4d0c8] pt-[3px]">
                <!-- tab rows -->
                <div class="flex h-5 pl-px">
                    <button class="w-[128px] flex items-center pl-[14px] gap-[7px] rounded-t-sm border-t border-l border-r border-t-white border-l-white border-r-[#404040]"><svg class="w-4 h-4" viewBox="0 0 16 16"><path d="M1.500.5h9l4 4v11h-13z" fill="#fff" stroke="#000"/><path d="M10.500.5v4h4" fill="none" stroke="#000"/><circle cx="8" cy="6" r="3" fill="#c1c" stroke="#414"/><path d="M7 8h2v2H7zM7 12h3v2H7z" fill="#c1c"/></svg>File Benchmark</button>
                    <button class="w-[113px] flex items-center pl-[14px] gap-[6px] rounded-t-sm border-t border-l border-r border-t-white border-l-white border-r-[#404040]"><svg class="w-4 h-4" viewBox="0 0 16 16"><path d="M.5.5h15v15H.5z" fill="#ffffd8" stroke="#000"/><path d="M1 9h3v6H1zM7 7h3v8H7zM12 9h3v6h-3z" fill="#0d0"/><path d="M4 12h3v3H4zM10 9h2v6h-2z" fill="#24c"/></svg>Disk monitor</button>
                    <button class="w-[77px] flex items-center pl-[13px] gap-[7px] rounded-t-sm border-t border-l border-r border-t-white border-l-white border-r-[#404040]"><svg class="w-[17px] h-4" viewBox="0 0 17 16"><path d="M1 5h3l5-4.500v14L4 10H1z" fill="#e8d820" stroke="#000"/><path d="M11 5c1 1 1 4 0 5M13 3c2 2 2 7 0 9" fill="none" stroke="#555"/></svg>AAM</button>
                    <button class="w-[133px] flex items-center pl-[14px] gap-[7px] rounded-t-sm border-t border-l border-r border-t-white border-l-white border-r-[#404040]"><svg class="w-4 h-4" viewBox="0 0 16 16"><path d="M.5.5h15v15H.5z" fill="#ffffd8" stroke="#000"/><path d="M3 9h1v1H3zM5 6h1v1H5zM8 7h1v1H8zM11 4h1v1h-1zM7 4h1v1H7z" fill="#22c"/><path d="M3 12h1v1H3zM6 11h1v1H6zM9 10h1v1H9zM12 9h1v1h-1zM10 13h1v1h-1z" fill="#d22"/></svg>Random Access</button>
                    <button class="w-[103px] flex items-center pl-[14px] gap-[6px] rounded-t-sm border-t border-l border-r border-t-white border-l-white border-r-[#404040]"><svg class="w-4 h-4" viewBox="0 0 16 16"><path d="M.5.5h15v15H.5z" fill="#ffffd8" stroke="#000"/><path d="M1 7h2v8H1z" fill="#0c0"/><path d="M3 10h3v5H3z" fill="#24c"/><path d="M6.500 6.500h9v9h-9z" fill="#fff" stroke="#000"/><path d="M7 7h8v2H7z" fill="#24c"/><path d="M8 10.500h7M8 12.500h7" stroke="#d22" stroke-dasharray="1 1"/></svg>Extra tests</button>
                </div>
                <div class="flex h-5 items-stretch">
                    <button class="w-[109px] relative -mt-[2px] -mb-px pb-[2px] flex items-center pl-[14px] gap-[7px] rounded-t-sm border-t border-l border-r border-t-white border-l-white border-r-[#404040] bg-[#d4d0c8]"><svg class="w-4 h-4" viewBox="0 0 16 16"><circle cx="8" cy="4.500" r="4" fill="#e3e32c" stroke="#555"/><path d="M6.500 8h3v3h-3zM6 13h4v2.500H6z" fill="#c9c91e" stroke="#555"/></svg>Benchmark</button>
                    <button class="w-[68px] flex items-center pl-[13px] gap-[6px] rounded-t-sm border-t border-l border-r border-t-white border-l-white border-r-[#404040]"><svg class="w-4 h-4" viewBox="0 0 16 16"><circle cx="8" cy="2.500" r="2" fill="#19f" stroke="#013"/><path d="M4.500 6.500h5v7h2v2h-7v-2h1v-5h-1z" fill="#16e" stroke="#013"/></svg>Info</button>
                    <button class="w-[84px] flex items-center pl-[14px] gap-[6px] rounded-t-sm border-t border-l border-r border-t-white border-l-white border-r-[#404040]"><svg class="w-4 h-4" viewBox="0 0 16 16"><path d="M5.500.5h5v5h5v5h-5v5h-5v-5h-5v-5h5z" fill="#e02020" stroke="#600"/></svg>Health</button>
                    <button class="w-[102px] flex items-center pl-[13px] gap-[6px] rounded-t-sm border-t border-l border-r border-t-white border-l-white border-r-[#404040]"><svg class="w-4 h-4" viewBox="0 0 16 16"><path d="M8 8l6 6" stroke="#118" stroke-width="3"/><circle cx="5.500" cy="5" r="4.500" fill="#3d3" stroke="#153"/></svg>Error Scan</button>
                    <button class="w-[114px] flex items-center pl-[13px] gap-[6px] rounded-t-sm border-t border-l border-r border-t-white border-l-white border-r-[#404040]"><svg class="w-4 h-4" viewBox="0 0 16 16"><path d="M.5 13V2l1-1.500h4L7 2.500h6.500V4" fill="#ffe873" stroke="#000"/><path d="M3.500 4.500h12v11h-12l-3-2z" fill="#e8b820" stroke="#000"/></svg>Folder Usage</button>
                    <button class="w-[78px] flex items-center pl-[13px] gap-[6px] rounded-t-sm border-t border-l border-r border-t-white border-l-white border-r-[#404040]"><svg class="w-4 h-4" viewBox="0 0 16 16"><path d="M2 2.500h12M6 1h4" stroke="#222" stroke-width="2"/><path d="M3.500 4.500h9l-1 11h-7z" fill="#777" stroke="#222"/><path d="M6 5v10M10 5v10" stroke="#222"/></svg>Erase</button>
                </div>

                <!-- benchmark page -->
                <div class="flex h-[374px] pr-[2px] border border-t-white border-l-white border-r-[#404040] border-b-[#404040] shadow-[inset_-1px_-1px_#808080]">
                    <svg id="chart" class="w-[449px] h-[372px]" viewBox="0 0 449 372" font-size="11" fill="#1a1a1a">
                        <defs><linearGradient id="plot" x1="0" y1="0" x2="0" y2="1"><stop offset="0" stop-color="#000"/><stop offset="1" stop-color="#434343"/></linearGradient></defs>
                        <path d="M24 29h400v313H24z" fill="#000"/>
                        <path d="M26 31h397v309H26z" fill="url(#plot)"/>
                        <g id="grid" shape-rendering="crispEdges"></g>
                        <polyline transform="translate(27 31)" fill="none" stroke="#00bfff" points="0,62 1,59 3,40 4,50 5,69 6,79 7,82 9,57 11,95 13,91 15,105 17,138 19,120 21,95 23,133 25,134 27,45 29,82 31,89 33,61 35,72 37,85 39,69 41,65 43,94 45,93 47,67 49,84 51,114 53,85 55,99 57,107 59,85 61,67 63,90 65,127 67,87 69,99 71,109 73,73 75,99 77,109 79,73 81,103 83,117 85,75 87,115 89,107 91,78 93,115 95,114 97,84 99,109 101,120 103,84 105,120 107,119 109,84 111,122 112,145 113,216 114,185 115,92 116,125 117,167 119,126 121,142 123,119 125,133 127,90 129,112 131,126 132,93 134,119 136,124 138,92 140,125 142,126 144,94 146,129 147,142 149,189 150,229 151,249 152,264 153,230 154,149 156,94 157,115 158,139 159,141 160,143" shape-rendering="crispEdges"/>
                        <text x="27" y="28">MB/s</text>
                        <text x="422" y="28" text-anchor="end">ms</text>
                    </svg>
                    <div class="w-[102px] flex flex-col">
                        <button class="mt-[10px] ml-[9px] w-[75px] h-[23px] shrink-0 border border-black bg-[#d4d0c8] shadow-[inset_1px_1px_#fff,inset_-1px_-1px_#404040]">Stop</button>
                        <hr class="mt-[10px] h-[2px] border-t border-[#808080] bg-white">
                        <label class="mt-[3px] h-4 pl-[6px] flex items-center gap-[5px] text-[#808080] text-shadow-[1px_1px_#fff]"><input type="radio" name="mode" disabled checked class="appearance-none w-3 h-3 rounded-full border border-t-[#606060] border-l-[#606060] border-white bg-[radial-gradient(circle,#808080_2px,transparent_2px)]">Read</label>
                        <label class="h-4 pl-[6px] flex items-center gap-[5px] text-[#808080] text-shadow-[1px_1px_#fff]"><input type="radio" name="mode" disabled class="appearance-none w-3 h-3 rounded-full border border-t-[#606060] border-l-[#606060] border-white">Write</label>
                        <hr class="mt-[2px] h-[2px] border-t border-[#808080] bg-white">
                        <label class="mt-1 h-4 pl-[6px] flex items-center gap-[5px]"><input type="checkbox" class="appearance-none w-[13px] h-[13px] bg-white border border-t-[#404040] border-l-[#404040] border-[#e8e6e2]">Short stroke</label>
                        <div class="mt-[6px] h-5 pl-[6px] flex items-center">
                            <input type="text" aria-label="Short stroke size" disabled value="40" class="w-[46px] h-5 pl-[2px] border border-r-0 border-t-[#404040] border-l-[#404040] border-b-white bg-[#d4d0c8] text-[#808080]">
                            <svg class="w-4 h-5" viewBox="0 0 16 20"><path d="M0 .5h16" stroke="#404040"/><path d="M.5 9V2.500H14M.5 17v-6H14" fill="none" stroke="#fff"/><path d="M0 9.500h14.500V2M0 17.500h14.500V11" fill="none" stroke="#404040"/><path d="M5 7h5L7.500 4zM5 13h5l-2.500 3z" fill="#808080"/><path d="M0 19.500h15.500V1" fill="none" stroke="#fff"/></svg>
                            <span class="ml-[11px]">gB</span>
                        </div>
                        <label class="mt-[7px] h-4 pl-[6px] flex items-center gap-[5px]"><span class="grid place-items-center"><input type="checkbox" checked class="col-start-1 row-start-1 appearance-none w-[13px] h-[13px] bg-white border border-t-[#404040] border-l-[#404040] border-[#e8e6e2]"><svg class="col-start-1 row-start-1 w-[7px] h-[7px] pointer-events-none" viewBox="0 0 7 7"><path d="M0 2l2 2 5-4v3L2 7 0 5z" fill="#000"/></svg></span>Transfer rate</label>
                        <hr class="mt-px h-[2px] border-t border-[#808080] bg-white">
                        <div class="h-4 pl-[6px] leading-4">Minimum</div>
                        <div class="ml-[6px] w-[93px] h-4 flex items-center justify-center bg-black border border-t-[#808080] border-l-[#808080] border-white font-bold text-[#00bfff] font-['DejaVu_Sans_Condensed','DejaVu_Sans',sans-serif]">11.8 MB/s</div>
                        <div class="h-4 pl-[6px] leading-4">Maximum</div>
                        <div class="ml-[6px] w-[93px] h-4 flex items-center justify-center bg-black border border-t-[#808080] border-l-[#808080] border-white font-bold text-[#00bfff] font-['DejaVu_Sans_Condensed','DejaVu_Sans',sans-serif]">69.5 MB/s</div>
                        <div class="h-[15px] pl-[6px] leading-[15px]">Average</div>
                        <div class="ml-[6px] w-[93px] h-4 bg-black border border-t-[#808080] border-l-[#808080] border-white"></div>
                        <hr class="mt-[7px] h-[2px] border-t border-[#808080] bg-white">
                        <label class="mt-[3px] h-4 pl-[6px] flex items-center gap-[5px]"><span class="grid place-items-center"><input type="checkbox" checked class="col-start-1 row-start-1 appearance-none w-[13px] h-[13px] bg-white border border-t-[#404040] border-l-[#404040] border-[#e8e6e2]"><svg class="col-start-1 row-start-1 w-[7px] h-[7px] pointer-events-none" viewBox="0 0 7 7"><path d="M0 2l2 2 5-4v3L2 7 0 5z" fill="#000"/></svg></span>Access time</label>
                        <div class="ml-[6px] w-[93px] h-4 bg-black border border-t-[#808080] border-l-[#808080] border-white"></div>
                        <label class="mt-[2px] h-4 pl-[6px] flex items-center gap-[5px]"><span class="grid place-items-center"><input type="checkbox" checked class="col-start-1 row-start-1 appearance-none w-[13px] h-[13px] bg-white border border-t-[#404040] border-l-[#404040] border-[#e8e6e2]"><svg class="col-start-1 row-start-1 w-[7px] h-[7px] pointer-events-none" viewBox="0 0 7 7"><path d="M0 2l2 2 5-4v3L2 7 0 5z" fill="#000"/></svg></span>Burst rate</label>
                        <div class="ml-[6px] w-[93px] h-4 bg-black border border-t-[#808080] border-l-[#808080] border-white"></div>
                        <div class="mt-px h-4 pl-[6px] leading-4">CPU usage</div>
                        <div class="ml-[6px] w-[93px] h-4 bg-black border border-t-[#808080] border-l-[#808080] border-white"></div>
                    </div>
                </div>
            </div>
        </div>
    </div>

    <script>
        const colors = [
            '#000000', '#7f7f7f', '#880015', '#ed1c24', '#ff7f27', '#fff200', '#22b14c', '#00a2e8', '#3f48cc', '#a349a4',
            '#ffffff', '#c3c3c3', '#b97a57', '#ffaec9', '#ffc90e', '#efe4b0', '#b5e61d', '#99d9ea', '#7092be', '#c8bfe7'
        ];

        // each shape is drawn in a 20 x 20 cell
        const shapes = [
            'M2 4l16 11',
            'M2 16c3-1 3-8 6-8s0 8 4 8c3 0 3-10 6-12',
            'M2.500 10a7.500 6 0 1 0 15 0a7.500 6 0 1 0-15 0z',
            'M2.500 4.500h14v11h-14z',
            'M5.500 4.500h9q3 0 3 3v5q0 3-3 3h-9q-3 0-3-3v-5q0-3 3-3z',
            'M6 4.500h11l-3 6h3.500v5H2.500z M9 10.500h5',
            'M10 4l7.500 12h-15z',
            'M2.500 3v14h14z',
            'M10 3.500l7 6.500-7 6.500L3 10z',
            'M10 3l7.500 6-3 8h-9l-3-8z',
            'M10 2.500l7 4v8l-7 3-7-3v-8z',
            'M2.500 7h7.500V3l7 7-7 7v-4H2.500z',
            'M17.500 7h-7.500V3L3 10l7 7v-4h7.500z',
            'M7 17.500v-7.500h-4L10 3l7 7h-4v7.500z',
            'M7 2.500v7.500h-4l7 7 7-7h-4V2.500z',
            'M10 3l1.500 5.500 5.500 1.500-5.500 1.500L10 17l-1.500-5.500L3 10l5.500-1.500z',
            'M10 3l2 5h5l-4 3.500 1.500 5L10 13.500 5.500 16.500 7 11.500 3 8h5z',
            'M10 2.500l2.500 4H17l-2 3.500 2 3.500h-4.500L10 17.500l-2.500-4H3L5 10 3 6.500h4.500z',
            'M5 4.500h10q2.500 0 2.500 2v4q0 3-2.500 3h-5l-3 3.500v-3.500H5q-2.500 0-2.500-3v-4q0-2 2.500-2z',
            'M5 13c-5-4 0-8.500 5-8.500 11 0 10 9 0 9l-5 3z',
            'M5 6c0-2 4-3 5-1 2-2 5-1 5 1 3 0 3 4 1 5 1 2-2 4-4 2-2 2-4 1-5 0l-1 4-1-4c-3 0-3-3-1-4-2-2-1-3 1-3z'
        ];

        document.getElementById('shapes').innerHTML = shapes.map(d => `
            <button aria-label="Tvar" class="w-5 h-[19px]"><svg class="w-5 h-5" viewBox="0 0 20 20" fill="#e8f4fb" stroke="#1e68ab" stroke-width="1.200"><path d="${d}"/></svg></button>`).join('');

        let cells = '';
        for (let i = 0; i < 30; i++) {
            if (colors[i]) {
                cells += `<button aria-label="Barva" class="w-5 h-5 border border-[#808080] bg-white p-px"><span class="block w-full h-full" style="background:${colors[i]}"></span></button>`;
            } else {
                cells += '<button aria-label="Vlastní barva" class="w-5 h-5 border border-[#808080]"></button>';
            }
        }
        document.getElementById('palette').innerHTML = cells;

        // rulers, one cell for each 100 px
        let rx = '', ry = '';
        for (let n = 0; n < 19; n++) {
            rx += `<div class="w-[100px] h-full shrink-0 flex flex-col justify-between border-l border-[#8c9db5]"><span class="pl-[2px] pt-px leading-[14px]">${n * 100}</span><span class="h-[3px] ml-[9px] bg-[repeating-linear-gradient(to_right,#8c9db5_0_1px,transparent_1px_10px)]"></span></div>`;
        }
        for (let n = 0; n < 9; n++) {
            ry += `<div class="h-[100px] w-full shrink-0 flex justify-between border-t border-[#8c9db5]"><span class="w-[14px] pb-[2px] pr-px leading-[14px] self-start rotate-180 [writing-mode:vertical-rl]">${n * 100}</span><span class="w-1 mt-[9px] bg-[repeating-linear-gradient(to_bottom,#8c9db5_0_1px,transparent_1px_10px)]"></span></div>`;
        }
        document.getElementById('rulerX').insertAdjacentHTML('beforeend', rx);
        document.getElementById('rulerY').insertAdjacentHTML('beforeend', ry);

        // chart grid and axis labels
        let minor = '', major = '', labels = '';
        for (let i = 0; i <= 20; i++) {
            const x = 26 + Math.round(i * 19.75);
            const line = `<path d="M${x} 31h1v311h-1z" fill="${i % 2 ? '#434343' : '#787878'}"/>`;
            if (i % 2) minor += line; else major += line;
            if (i % 2 === 0) {
                labels += `<text x="${x}" y="355" text-anchor="middle">${i * 20}${i === 20 ? 'gB' : ''}</text>`;
            }
        }
        for (let i = 0; i < 16; i++) {
            const y = 31 + Math.round(i * 19.29);
            const line = `<path d="M24 ${y}h401v1H24z" fill="${i % 2 ? '#434343' : '#787878'}"/>`;
            if (i % 2) minor += line; else major += line;
            if (i % 2 === 0) {
                labels += `<text x="22" y="${y + 4}" text-anchor="end">${80 - i * 5}</text>`;
                labels += `<text x="426" y="${y + 4}">${40 - i * 2.5}</text>`;
            }
        }
        document.getElementById('grid').innerHTML = minor + major;
        document.getElementById('chart').insertAdjacentHTML('beforeend', labels);
    </script>
</body>
</html>
